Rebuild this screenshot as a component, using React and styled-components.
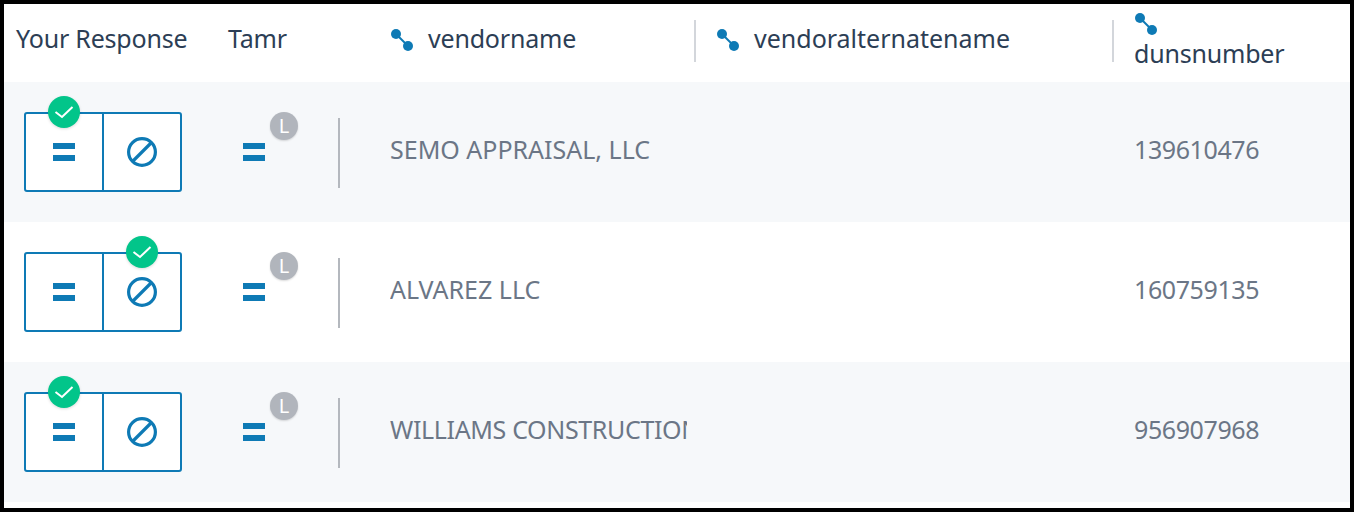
import React from "react";
import styled, { createGlobalStyle } from "styled-components";

const blue = "#0e7ab5";
const columns = "212px 162px 317px 418px 237px";

const GlobalStyle = createGlobalStyle`
  html, body {
    margin: 0;
    padding: 0;
    background: #000;
  }
  * {
    box-sizing: border-box;
  }
`;

const Frame = styled.div`
  width: 1354px;
  height: 512px;
  border: 4px solid #000;
  background: #fff;
  overflow: hidden;
  font-family: "Noto Sans", "Liberation Sans", sans-serif;
`;

const HeaderRow = styled.div`
  display: grid;
  grid-template-columns: ${columns};
  height: 78px;
  align-items: start;
  color: #2c3e55;
  font-size: 25px;
  letter-spacing: -0.2px;
`;

const HeaderCell = styled.div`
  display: flex;
  flex-direction: ${(p) => (p.$stacked ? "column" : "row")};
  align-items: ${(p) => (p.$stacked ? "flex-start" : "center")};
  height: ${(p) => (p.$stacked ? "auto" : "42px")};
  margin-top: ${(p) => (p.$stacked ? "8px" : "15px")};
  padding-left: ${(p) => p.$pad || 12}px;
  white-space: nowrap;
`;

const HeaderLabel = styled.span`
  margin-bottom: ${(p) => (p.$stacked ? 0 : "4px")};
  letter-spacing: ${(p) => (p.$wide ? "0" : "inherit")};
`;

const HeaderDivider = styled.div`
  position: relative;
  &::before {
    content: "";
    position: absolute;
    left: -1px;
    top: 16px;
    width: 2px;
    height: 42px;
    background: #d3d6db;
  }
`;

const LinkGlyph = styled.svg`
  display: block;
  width: 24px;
  height: 24px;
  flex: none;
  margin-right: ${(p) => (p.$stacked ? 0 : "14px")};
`;

const Row = styled.div`
  display: grid;
  grid-template-columns: ${columns};
  height: 140px;
  align-items: center;
  background: ${(p) => (p.$striped ? "#f6f8fa" : "#fff")};
`;

const ResponseCell = styled.div`
  padding-left: 20px;
`;

const ButtonGroup = styled.div`
  display: flex;
  width: 158px;
  height: 80px;
  border: 2px solid ${blue};
  border-radius: 3px;
  background: #fff;
`;

const ChoiceButton = styled.div`
  position: relative;
  display: flex;
  align-items: center;
  justify-content: center;
  width: ${(p) => (p.$first ? "78px" : "76px")};
  border-right: ${(p) => (p.$first ? `2px solid ${blue}` : "none")};
`;

const CheckBadge = styled.div`
  position: absolute;
  top: -18px;
  left: 22px;
  display: flex;
  align-items: center;
  justify-content: center;
  width: 32px;
  height: 32px;
  border-radius: 50%;
  background: #02c58a;
  box-shadow: 0 1px 3px rgba(0, 0, 0, 0.15);
`;

const TamrCell = styled.div`
  display: flex;
  align-items: center;
  justify-content: space-between;
  padding: 0 38px 0 27px;
`;

const TamrMark = styled.div`
  position: relative;
  display: flex;
`;

const LowBadge = styled.div`
  position: absolute;
  left: 27px;
  top: -31px;
  width: 28px;
  height: 28px;
  border-radius: 50%;
  background: #b1b5bc;
  color: #fff;
  font-size: 20px;
  line-height: 28px;
  text-align: center;
  box-shadow: 0 1px 2px rgba(0, 0, 0, 0.15);
`;

const CellRule = styled.div`
  width: 2px;
  height: 70px;
  margin-top: 2px;
  background: #b4b8be;
`;

const ValueCell = styled.div`
  margin: 0 ${(p) => p.$right || 0}px 0 ${(p) => p.$left || 12}px;
  padding-bottom: 6px;
  color: #6b7686;
  font-size: 25px;
  letter-spacing: ${(p) => p.$spacing || 0}px;
  white-space: nowrap;
  overflow: hidden;
`;

const EqualsIcon = () => (
  <svg width="22" height="18" viewBox="0 0 22 18" style={{ display: "block" }}>
    <rect x="0" y="0" width="22" height="6" fill={blue} />
    <rect x="0" y="12" width="22" height="6" fill={blue} />
  </svg>
);

const BanIcon = () => (
  <svg width="32" height="32" viewBox="0 0 32 32" style={{ display: "block" }}>
    <circle cx="16" cy="16" r="13.4" fill="none" stroke={blue} strokeWidth="3.2" />
    <line x1="6.5" y1="25.5" x2="25.5" y2="6.5" stroke={blue} strokeWidth="3.2" />
  </svg>
);

const CheckIcon = () => (
  <svg width="20" height="14" viewBox="0 0 20 14">
    <path d="M1.5 7 L8 12 L18.5 2" fill="none" stroke="#fff" strokeWidth="2" />
  </svg>
);

const LinkIcon = ({ stacked }) => (
  <LinkGlyph $stacked={stacked} viewBox="0 0 24 24">
    <line x1="6" y1="6" x2="18" y2="18" stroke={blue} strokeWidth="2" />
    <circle cx="6" cy="6" r="5" fill={blue} />
    <circle cx="18" cy="18" r="5" fill={blue} />
  </LinkGlyph>
);

const records = [
  { name: "SEMO APPRAISAL, LLC", duns: "139610476", choice: "same" },
  { name: "ALVAREZ LLC", duns: "160759135", choice: "different" },
  { name: "WILLIAMS CONSTRUCTION", duns: "956907968", choice: "same", spacing: -0.35 },
];

const Check = () => (
  <CheckBadge>
    <CheckIcon />
  </CheckBadge>
);

export default function App() {
  return (
    <>
      <GlobalStyle />
      <Frame>
        <HeaderRow>
          <HeaderCell>
            <HeaderLabel>Your Response</HeaderLabel>
          </HeaderCell>
          <HeaderCell>
            <HeaderLabel>Tamr</HeaderLabel>
          </HeaderCell>
          <HeaderCell>
            <LinkIcon />
            <HeaderLabel>vendorname</HeaderLabel>
          </HeaderCell>
          <HeaderDivider>
            <HeaderCell $pad={21}>
              <LinkIcon />
              <HeaderLabel $wide>vendoralternatename</HeaderLabel>
            </HeaderCell>
          </HeaderDivider>
          <HeaderDivider>
            <HeaderCell $stacked $pad={21}>
              <LinkIcon stacked />
              <HeaderLabel $stacked>dunsnumber</HeaderLabel>
            </HeaderCell>
          </HeaderDivider>
        </HeaderRow>
        {records.map((r, i) => (
          <Row key={r.duns} $striped={i % 2 === 0}>
            <ResponseCell>
              <ButtonGroup>
                <ChoiceButton $first>
                  {r.choice === "same" && <Check />}
                  <EqualsIcon />
                </ChoiceButton>
                <ChoiceButton>
                  {r.choice === "different" && <Check />}
                  <BanIcon />
                </ChoiceButton>
              </ButtonGroup>
            </ResponseCell>
            <TamrCell>
              <TamrMark>
                <EqualsIcon />
                <LowBadge>L</LowBadge>
              </TamrMark>
              <CellRule />
            </TamrCell>
            <ValueCell $right={8} $spacing={r.spacing}>
              {r.name}
            </ValueCell>
            <div />
            <ValueCell $left={21} $spacing={-0.4}>
              {r.duns}
            </ValueCell>
          </Row>
        ))}
      </Frame>
    </>
  );
}
